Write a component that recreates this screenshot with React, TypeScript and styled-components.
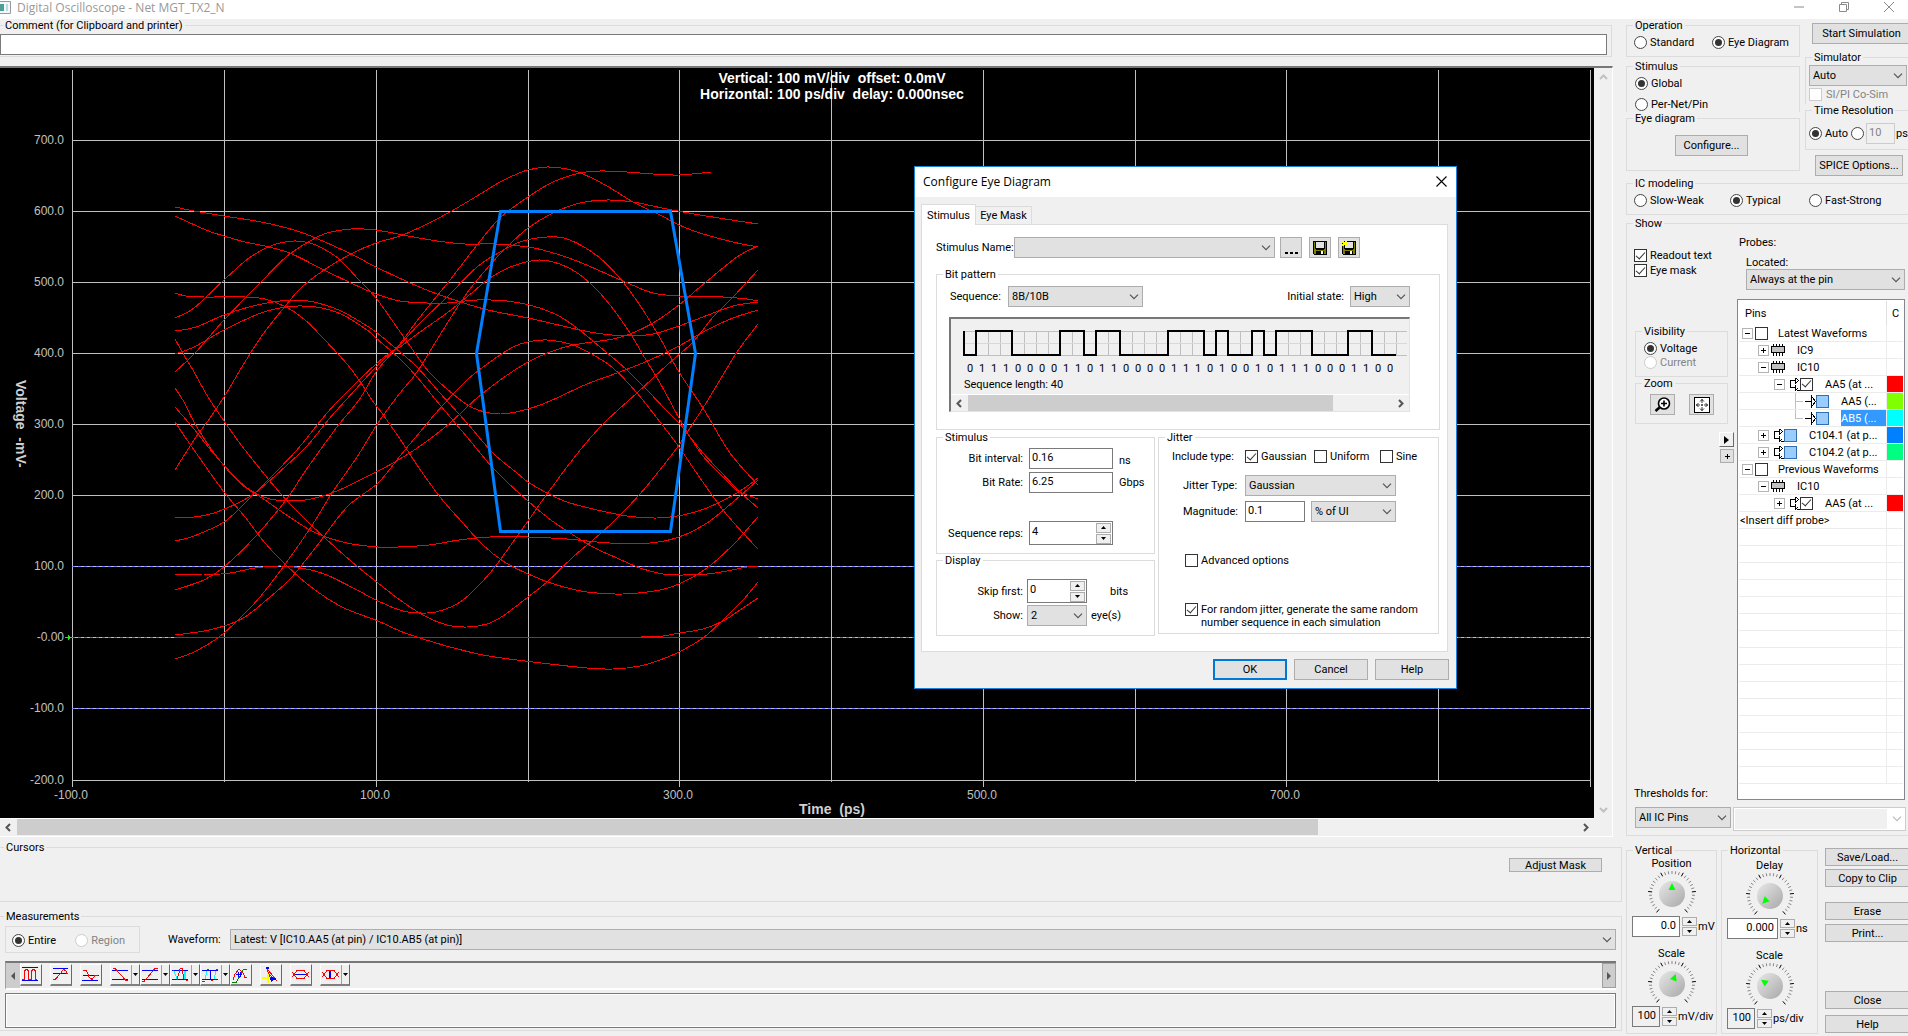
import React from "react";
import styled, { createGlobalStyle, css } from "styled-components";

const ui = `Roboto, "Liberation Sans", Arial, sans-serif`;
const plotFont = `"Liberation Sans", Arial, sans-serif`;
const caption = `"Open Sans", "Noto Sans", sans-serif`;

const Global = createGlobalStyle`
  *, *::before, *::after { box-sizing: border-box; }
  body { margin: 0; background: #f0f0f0; color: #000; font: 11px/13px ${ui}; overflow: hidden; }
  button, input, select { font: inherit; color: inherit; margin: 0; border-radius: 0; }
  svg { display: block; }
`;

/* ---------- shared controls ---------- */

const Page = styled.div`
  height: 100vh;
  display: flex;
  flex-direction: column;
  overflow: hidden;
`;

const TitleBar = styled.header`
  height: 19px;
  flex: none;
  background: #fff;
  display: flex;
  align-items: flex-start;
  margin-right: -3px;
`;

const TitleText = styled.h1`
  margin: 0 auto 0 6px;
  font: 400 12px/16px ${caption};
  color: #999;
`;

const CaptionButton = styled.button<{ $w?: number }>`
  width: ${(p) => p.$w ?? 45}px;
  height: 14px;
  padding: 0;
  border: 0;
  background: transparent;
  color: #8a8a8a;
  display: grid;
  place-items: center;
`;

const Workspace = styled.main`
  flex: 1;
  min-height: 0;
  display: grid;
  grid-template-columns: minmax(0, 1fr) 282px;
  grid-template-rows: minmax(0, 1fr);
  column-gap: 4px;
  overflow: hidden;
`;

const Group = styled.fieldset<{ $open?: "bottom" | "left"; $h?: number }>`
  margin: 0;
  padding: 0;
  min-width: 0;
  border: 1px solid #dcdcdc;
  height: ${(p) => (p.$h ? `${p.$h}px` : "auto")};
  ${(p) => p.$open === "bottom" && css`border-bottom: 0;`}
  ${(p) => p.$open === "left" && css`border-left: 0;`}
`;

const Legend = styled.legend<{ $x?: number }>`
  margin-left: ${(p) => p.$x ?? 6}px;
  padding: 0 2px;
  height: 13px;
  line-height: 14px;
  white-space: nowrap;
`;

const PushButton = styled.button<{ $w?: number; $h?: number; $primary?: boolean }>`
  flex: none;
  width: ${(p) => (p.$w ? `${p.$w}px` : "auto")};
  height: ${(p) => p.$h ?? 21}px;
  padding: 0;
  display: flex;
  align-items: center;
  justify-content: center;
  white-space: nowrap;
  background: #e1e1e1;
  border: ${(p) => (p.$primary ? "2px solid #0078d7" : "1px solid #adadad")};
`;

const SelectBox = styled.span<{ $w?: number; $h?: number }>`
  position: relative;
  display: block;
  flex: ${(p) => (p.$w ? "none" : "1")};
  width: ${(p) => (p.$w ? `${p.$w}px` : "auto")};
  height: ${(p) => p.$h ?? 21}px;

  select {
    appearance: none;
    width: 100%;
    height: 100%;
    padding: 0 18px 0 3px;
    background: #e1e1e1;
    border: 1px solid #adadad;
  }
  select:disabled {
    background: linear-gradient(to left, #fff 18px, #f0f0f0 18px);
    border: 1px solid #ccc;
    outline: 1px solid #fff;
    outline-offset: -2px;
    opacity: 1;
  }
  svg { position: absolute; right: 4px; top: 50%; margin-top: -3px; pointer-events: none; }
`;

function Select({ w, h, value, label, id, disabled }: { w?: number; h?: number; value: string; label?: string; id?: string; disabled?: boolean }) {
  return (
    <SelectBox $w={w} $h={h}>
      <select id={id} aria-label={label} disabled={disabled} defaultValue={value}>
        <option value={value}>{value}</option>
      </select>
      <svg width="10" height="6" viewBox="0 0 10 6" fill="none" stroke={disabled ? "#bbb" : "#555"} strokeWidth="1.2">
        <path d="M1 .7 5 4.7 9 .7" />
      </svg>
    </SelectBox>
  );
}

const ChoiceLabel = styled.label<{ $dim?: boolean; $gap?: number; $top?: boolean }>`
  display: flex;
  align-items: ${(p) => (p.$top ? "flex-start" : "center")};
  gap: ${(p) => p.$gap ?? 3}px;
  min-height: 13px;
  white-space: nowrap;
  color: ${(p) => (p.$dim ? "#838383" : "inherit")};
`;

const Mark = styled.input<{ $blue?: boolean }>`
  appearance: none;
  flex: none;
  width: 13px;
  height: 13px;
  border: 1px solid #333;
  background: #fff;
  display: grid;
  place-items: center;

  &[type="radio"] { border-radius: 50%; border-color: #444; }
  &[type="radio"]:checked::after { content: ""; width: 7px; height: 7px; border-radius: 50%; background: #333; }
  &[type="checkbox"]:checked::after {
    content: "";
    width: 9px;
    height: 5px;
    margin-top: -3px;
    border: solid #333;
    border-width: 0 0 1px 1px;
    transform: rotate(-48deg);
  }
  &&:disabled { border-color: #ccc; }
  ${(p) => p.$blue && css`&& { background: #99ccff; border-color: #3070b0; }`}
`;

function Choice({ type, name, text, on, dim, gap }: { type: "radio" | "checkbox"; name?: string; text: string; on?: boolean; dim?: boolean; gap?: number }) {
  return (
    <ChoiceLabel $dim={dim} $gap={gap}>
      <Mark type={type} name={name} defaultChecked={on} disabled={dim} />
      {text}
    </ChoiceLabel>
  );
}

const TextBox = styled.input<{ $w?: number; $h?: number; $right?: boolean; $shade?: boolean }>`
  flex: none;
  width: ${(p) => (p.$w ? `${p.$w}px` : "100%")};
  height: ${(p) => p.$h ?? 21}px;
  padding: 0 3px 2px 2px;
  border: 1px solid #7a7a7a;
  background: ${(p) => (p.$shade ? "#f0f0f0" : "#fff")};
  text-align: ${(p) => (p.$right ? "right" : "left")};
  &:disabled { background: #f0f0f0; border-color: #ccc; color: #838383; }
`;

const Row = styled.div<{ $mt?: number; $gap?: number; $pl?: number; $pr?: number; $top?: boolean }>`
  display: flex;
  align-items: ${(p) => (p.$top ? "flex-start" : "center")};
  gap: ${(p) => p.$gap ?? 0}px;
  margin-top: ${(p) => p.$mt ?? 0}px;
  padding: 0 ${(p) => p.$pr ?? 0}px 0 ${(p) => p.$pl ?? 0}px;
  white-space: nowrap;
`;

const Column = styled.div<{ $w?: number; $gap?: number }>`
  display: flex;
  flex-direction: column;
  flex: ${(p) => (p.$w ? "none" : "1")};
  width: ${(p) => (p.$w ? `${p.$w}px` : "auto")};
  min-width: 0;
  gap: ${(p) => p.$gap ?? 0}px;
`;

const FieldLabel = styled.label<{ $w: number; $left?: boolean }>`
  flex: none;
  width: ${(p) => p.$w}px;
  text-align: ${(p) => (p.$left ? "left" : "right")};
`;

const SpinColumn = styled.span<{ $h: number }>`
  flex: none;
  width: 15px;
  height: ${(p) => p.$h}px;
  display: grid;
  grid-template-rows: 1fr 1fr;
  gap: 1px;
  button {
    padding: 0;
    border: 1px solid #adadad;
    background: #f0f0f0;
    display: grid;
    place-items: center;
  }
`;

function Spin({ h = 19 }: { h?: number }) {
  return (
    <SpinColumn $h={h}>
      <button aria-label="Increase"><svg width="5" height="3"><path d="M0 3 2.5 0 5 3z" /></svg></button>
      <button aria-label="Decrease"><svg width="5" height="3"><path d="M0 0 2.5 3 5 0z" /></svg></button>
    </SpinColumn>
  );
}

const SpinField = styled.span<{ $w: number }>`
  flex: none;
  width: ${(p) => p.$w}px;
  height: 24px;
  display: flex;
  align-items: center;
  padding-right: 1px;
  background: #fff;
  border: 1px solid #7a7a7a;
  input { flex: 1; min-width: 0; width: 0; height: 20px; border: 0; padding: 0 2px 4px; background: transparent; }
`;

/* ---------- left side ---------- */

const LeftSide = styled.div`
  display: flex;
  flex-direction: column;
  min-width: 0;
  min-height: 0;
`;

const CommentGroup = styled(Group)`
  flex: none;
  margin-right: 10px;
  margin-bottom: 9px;
  padding: 2px 4px 0 0;
`;

const PlotFrame = styled.section`
  flex: 1;
  min-height: 0;
  display: grid;
  grid-template-columns: minmax(0, 1fr) 18px;
  grid-template-rows: minmax(0, 1fr) 18px;
  margin-right: 9px;
  margin-bottom: 4px;
  border-top: 2px solid #777;
  border-right: 1px solid #fff;
  border-bottom: 1px solid #fff;
`;

const PlotSurface = styled.div`
  background: #000;
  overflow: hidden;
  min-height: 0;
  svg { width: 100%; height: 100%; }
  text { font-family: ${plotFont}; font-size: 12px; fill: #c0c0c0; }
  .axis { font-weight: 700; font-size: 14px; fill: #d0d0d0; white-space: pre; }
  .readout { font-weight: 700; font-size: 14px; fill: #fff; white-space: pre; }
`;

const VScroll = styled.div`
  display: flex;
  flex-direction: column;
  justify-content: space-between;
  align-items: center;
  padding: 5px 0 4px;
`;

const HScroll = styled.div<{ $thumb: string }>`
  height: 17px;
  border-top: 1px solid #fff;
  display: grid;
  grid-template-columns: 17px minmax(0, 1fr) 17px;
  justify-items: center;
  align-items: center;
  > span { justify-self: stretch; align-self: stretch; }
  > span::before { content: ""; display: block; height: 100%; width: ${(p) => p.$thumb}; background: #cdcdcd; }
`;

function Chevron({ d, color = "#555" }: { d: "left" | "right" | "up" | "down"; color?: string }) {
  const path = { left: "M6 1 2.5 4.5 6 8", right: "M3 1 6.5 4.5 3 8", up: "M1 6 4.5 2.5 8 6", down: "M1 3 4.5 6.5 8 3" }[d];
  return <svg width="9" height="9" fill="none" stroke={color} strokeWidth="2"><path d={path} /></svg>;
}

const traces: number[][] = [
  [175,207,194,211,224,216,261,222,294,230,318,239,351,254,376,267,408,282,437,294,461,302,488,310,528,318,550,323,580,330,603,334,627,336,653,334,679,326,703,317,733,306,758,302],
  [175,216,206,230,224,236,245,242,269,247,292,254,322,269,351,283,376,294,400,301,427,303,447,303,477,300,507,301,533,306,557,315,577,328,600,347,627,370,647,390,667,411,679,423,687,433,703,453,720,471,740,492,758,508],
  [175,293,186,296,204,297,245,297,265,299,286,307,304,319,322,337,347,364,361,383,372,400,384,416,400,439,417,465,440,497,462,522,483,545,503,561,528,574,557,585,587,592,623,594,660,590,679,584,707,568,733,545,743,534,758,517],
  [175,318,194,308,224,280,249,258,273,245,294,241,310,243,322,248,339,259,359,280,376,298,396,326,408,343,429,372,453,394,473,408,500,414,528,409,550,401,587,384,617,373,650,360,679,346,707,330,733,318,758,310],
  [175,331,196,327,224,315,249,307,273,302,292,300,314,302,339,310,359,321,376,332,400,352,417,367,440,393,467,423,493,453,517,473,528,482,547,493,567,502,593,509,627,516,657,518,683,515,707,508,737,493,758,478],
  [175,354,194,347,224,330,261,313,286,307,302,306,322,308,343,315,367,330,376,338,400,359,417,377,440,405,467,437,493,468,520,494,547,517,567,531,593,547,617,558,640,568,663,574,683,575,707,574,727,571,747,567,758,567],
  [175,339,184,355,194,372,208,397,224,421,245,450,281,494,311,525,352,562,378,583,400,600,423,615,447,625,467,627,487,624,503,616,528,597,547,582,573,557,593,540,613,522,640,494,663,466,679,445,690,428,703,408,720,380,737,352,758,324],
  [175,372,196,352,224,320,261,282,286,257,310,241,327,233,351,229,376,230,408,236,437,241,465,244,496,244,528,247,550,252,577,261,607,274,630,284,653,293,679,296,723,297,747,299,758,301],
  [175,388,184,402,194,422,214,453,240,483,265,500,291,518,316,533,347,543,378,547,398,547,429,545,459,540,490,537,528,537,567,539,610,543,650,543,679,537,707,523,733,502,758,480],
  [175,407,194,429,214,454,240,482,255,493,270,499,291,501,311,499,337,491,378,471,400,459,423,444,450,423,477,398,503,378,528,362,550,352,573,345,613,339,630,334,653,323,679,305,700,287,737,257,758,246],
  [175,422,194,450,224,492,245,517,265,543,286,565,311,587,342,607,378,621,400,631,420,638,450,647,483,655,517,660,550,664,587,668,613,669,640,666,660,660,679,652,703,638,723,620,743,600,758,582],
  [175,470,194,440,210,418,224,397,245,362,261,337,282,310,302,287,327,268,351,254,376,243,400,236,423,226,450,212,477,196,500,182,517,174,528,170,547,167,567,169,583,174,607,186,633,202,660,215,679,225,700,233,733,242,758,247],
  [175,517,194,517,214,513,240,502,255,493,276,475,306,447,329,419,346,400,376,367,394,350,400,345,420,323,447,297,477,267,500,252,520,242,547,237,570,240,600,258,623,282,643,310,660,338,679,372,703,408,730,453,758,485],
  [175,541,194,536,224,522,245,503,265,483,296,451,322,419,339,400,376,364,394,350,400,347,420,332,447,313,473,292,490,278,513,266,540,260,567,267,590,283,610,305,630,333,643,355,660,383,679,418,690,437,703,456,720,474,733,487,740,492,758,499],
  [175,574,204,575,230,573,255,568,281,566,306,569,327,575,357,590,378,601,403,611,427,613,443,610,463,600,490,573,513,542,528,521,547,494,577,454,603,424,637,393,667,365,693,342,713,317,733,297,758,270],
  [175,590,204,580,224,567,255,537,286,500,306,470,337,427,359,400,376,372,394,351,400,344,420,317,450,280,477,245,500,218,528,197,553,182,580,173,600,171,627,172,653,174,679,175,711,172],
  [175,635,204,631,224,626,245,617,270,597,291,578,316,547,347,507,378,483,400,456,420,432,443,405,467,380,490,362,513,347,528,342,547,340,570,344,590,353,613,368,637,393,660,422,679,447,700,478,723,510,743,533,758,549],
  [175,659,194,652,219,637,240,618,260,597,286,563,311,527,332,493,357,457,378,423,400,393,417,372,443,330,467,293,490,265,507,247,528,228,553,213,580,203,607,200,633,202,667,209,700,215,758,224],
  [641,637,663,636,679,633,703,629,723,621,740,610,758,598],
];

function smooth(f: number[]) {
  const n = f.length / 2;
  const at = (i: number) => {
    const k = Math.max(0, Math.min(n - 1, i));
    return [f[2 * k], f[2 * k + 1]];
  };
  let d = `M${f[0]} ${f[1]}`;
  for (let i = 0; i < n - 1; i++) {
    const [a, b, c, e] = [at(i - 1), at(i), at(i + 1), at(i + 2)];
    d += `C${b[0] + (c[0] - a[0]) / 6} ${b[1] + (c[1] - a[1]) / 6} ${c[0] - (e[0] - b[0]) / 6} ${c[1] - (e[1] - b[1]) / 6} ${c[0]} ${c[1]}`;
  }
  return d;
}

const gridX = [72, 224, 376, 528, 679, 831, 983, 1135, 1286, 1438, 1590];
const gridY: [number, string][] = [[140, "700.0"], [211, "600.0"], [282, "500.0"], [353, "400.0"], [424, "300.0"], [495, "200.0"], [566, "100.0"], [637, "-0.00"], [708, "-100.0"], [780, "-200.0"]];

function Plot() {
  return (
    <PlotSurface>
      <svg viewBox="0 68 1594 750" preserveAspectRatio="xMinYMin meet" role="img" aria-label="Eye diagram waveforms">
        <g stroke="#c0c0c0" shapeRendering="crispEdges">
          {gridX.map((x, i) => <path key={x} d={`M${x + 0.5} 70V${i % 2 ? 782 : 787}`} />)}
          {gridY.map(([y]) => <path key={y} d={`M72 ${y + 0.5}H1591`} />)}
          <path d="M72 566.5H1591M72 708.5H1591" stroke="#8080ff" strokeDasharray="3 3" />
          <path d="M72 637.5H1591" stroke="#00c000" strokeDasharray="3 3" />
          <path d="M65 637.5H72M68.5 635V640M69.5 636V639" stroke="#00ff00" />
        </g>
        <g stroke="#ff0000" fill="none" shapeRendering="crispEdges">
          <path d="M175 637.5H758" />
          {traces.map((t, i) => <path key={i} d={smooth(t)} />)}
        </g>
        <path d="M500.5 211.5H670.5L695.5 353.5 670.5 531.5H500.5L476.5 353.5Z" fill="none" stroke="#0080ff" strokeWidth="3" />
        {gridY.map(([y, t]) => <text key={t} x="64" y={y + 4} textAnchor="end">{t}</text>)}
        {["-100.0", "100.0", "300.0", "500.0", "700.0"].map((t, i) => (
          <text key={t} x={gridX[i * 2] - 1} y="799" textAnchor="middle">{t}</text>
        ))}
        <text className="axis" transform="translate(16 380) rotate(90)">{"Voltage  -mV-"}</text>
        <text className="axis" x="832" y="814" textAnchor="middle">{"Time  (ps)"}</text>
        <text className="readout" x="832" y="83" textAnchor="middle">{"Vertical: 100 mV/div  offset: 0.0mV"}</text>
        <text className="readout" x="832" y="99" textAnchor="middle">{"Horizontal: 100 ps/div  delay: 0.000nsec"}</text>
      </svg>
    </PlotSurface>
  );
}

const CursorGroup = styled(Group)`
  flex: none;
  padding: 4px 19px 0 0;
  button { margin-left: auto; }
`;

const MeasureGroup = styled(Group)`
  flex: none;
  margin: 8px 0 5px;
  padding: 3px 5px 0;
`;

const RangeBox = styled.div`
  width: 135px;
  height: 27px;
  border: 1px solid #dcdcdc;
  padding: 2px 14px 0 6px;
  display: flex;
  align-items: center;
  justify-content: space-between;
`;

const ToolStrip = styled.div`
  margin-top: 8px;
  height: 29px;
  display: flex;
  align-items: stretch;
  border-top: 2px solid #777;
  border-left: 1px solid #a0a0a0;
  border-bottom: 2px solid #fff;
`;

const StripScroll = styled.button`
  width: 14px;
  padding: 0;
  border: 0;
  background: #cdcdcd;
  display: grid;
  place-items: center;
  &:last-child { margin-left: auto; border: 1px solid #a0a0a0; }
`;

const ToolButton = styled.button<{ $gap?: boolean; $split?: boolean }>`
  margin: 1px ${(p) => (p.$gap ? 8 : 0)}px 2px 0;
  width: ${(p) => (p.$split ? 30 : 22)}px;
  padding: 0;
  display: flex;
  align-items: stretch;
  background: #f0f0f0;
  border: 1px solid #fff;
  border-right: 1px solid #696969;
  border-bottom: 2px solid #808080;
  i { display: grid; place-items: center; width: 8px; border-left: 1px solid #a0a0a0; }
`;

const ReadoutBox = styled.output`
  display: block;
  margin-top: 3px;
  height: 35px;
  border: 1px solid #7a7a7a;
  outline: 1px solid #fff;
  outline-offset: -2px;
`;

const B = "#0000ff";
const R = "#ff0000";
const C = "#00ffff";
type Tool = { name: string; gap?: boolean; split?: boolean; strokes: [string, string, number?][] };
const tools: Tool[] = [
  { name: "Period", gap: true, strokes: [[B, "M1 2.5H17M1 15.5H17"], [R, "M1 14.5H3.5V6L5 4.5H6L7.5 6V14.5H10.5V6L12 4.5H13L14.5 6V14.5H16"]] },
  { name: "Overshoot", gap: true, strokes: [[B, "M2 3.5H17M2 8.5H17"], [R, "M2 14.5H4L10 8 11 6 13 4.5 15 6 16 8.5H17"]] },
  { name: "Undershoot", gap: true, strokes: [[B, "M2 10.5H18M1 15.5H17"], [R, "M2 5.5H5L7 9 8 12 11 14.5 13 12 14 10.5H17"]] },
  { name: "Fall time", split: true, strokes: [[B, "M1 5.5H17M1 14.5H17"], [R, "M2 3.5H4L15 15.5H17"]] },
  { name: "Rise time", split: true, strokes: [[B, "M1 5.5H17M1 14.5H17"], [R, "M1 16.5H3L14 3.5H17"]] },
  { name: "Width", split: true, strokes: [[B, "M1 5.5H17M1 14.5H17"], [C, "M3 6 6 14M13 6 15 14M15 6 13 14"], [R, "M2 5 3 6M6 15 9 4 11 3 13 14M15 15.5H17"]] },
  { name: "Delay", split: true, strokes: [[B, "M1 5.5H17M1 14.5H17M9.5 6V15"], [C, "M4 14 6 6M13 14 15 6"], [R, "M1 16.5H4M6 4.5H8M10 15.5H12M15 4.5H17"]] },
  { name: "Crossing", gap: true, strokes: [["#008000", "M1 17.5H5L9 11 12 5 16 4.5"], [R, "M2 15 4 9 8 4 12 8 14 12.5H16"], [B, "M5 9.5H11M7.5 7V12M9.5 7V12"]] },
  { name: "Slope", gap: true, strokes: [["#ffff00", "M6.5 2V18M1 12.5H13", 2], [R, "M6 4 11 17M7 5 16 16M8 9 13 14"], [B, "M5 3H8M11 12V16M9 14H15", 2]] },
  { name: "Eye height", gap: true, strokes: [[B, "M4 9.5H16"], [R, "M1 7 3 9.5 6 5.5H13L16 9.5 18 7M1 12 3 9.5 6 13.5H13L16 9.5 18 12"]] },
  { name: "Eye width", split: true, strokes: [[R, "M1 7 3 9.5 6 5.5H13L16 9.5 18 7M1 12 3 9.5 6 13.5H13L16 9.5 18 12"], [B, "M9 6V13", 2]] },
];

/* ---------- right side ---------- */

const RightSide = styled.aside`
  display: flex;
  flex-direction: column;
  width: 290px;
  min-height: 0;
`;

const Indent = styled.div<{ $l?: number; $t?: number }>`
  padding: ${(p) => p.$t ?? 0}px 0 0 ${(p) => p.$l ?? 0}px;
`;

const ShowGroup = styled(Group)`
  flex: 1;
  min-height: 0;
  margin: 2px 0 8px;
`;

const ShowBody = styled.div`
  height: 100%;
  display: flex;
  flex-direction: column;
`;

const ShowUpper = styled.div`
  flex: 1;
  display: flex;
  min-height: 0;
`;

const ShowLeft = styled.div`
  width: 110px;
  display: flex;
  flex-direction: column;
  padding: 19px 0 0 7px;
`;

const SubGroup = styled(Group)<{ $mt?: number }>`
  width: 93px;
  margin: ${(p) => p.$mt ?? 0}px 0 0 1px;
  padding: 4px 0 0 8px;
`;

const IconButton = styled.button<{ $w?: number; $h?: number; $raised?: boolean }>`
  flex: none;
  width: ${(p) => p.$w ?? 25}px;
  height: ${(p) => p.$h ?? 21}px;
  padding: 0;
  display: grid;
  place-items: center;
  background: ${(p) => (p.$raised ? "#f0f0f0" : "#e1e1e1")};
  border: 1px solid #adadad;
  ${(p) => p.$raised && css`border-color: #fff #696969 #696969 #fff;`}
`;

const SideKeys = styled.div`
  display: flex;
  flex-direction: column;
  align-items: flex-end;
  gap: 2px;
  margin: 8px 3px auto 0;
`;

const Tree = styled.table`
  flex: 1;
  width: 168px;
  display: flex;
  flex-direction: column;
  background: #fff;
  border: 1px solid #828790;
  margin-top: 9px;
  padding: 1px;
  overflow: hidden;
  thead, tbody { display: block; }
  tr { display: grid; grid-template-columns: minmax(0, 1fr) 17px; height: 17px; }
  thead tr { height: 24px; align-items: stretch; }
  th { font-weight: 400; text-align: left; padding: 6px 0 0 6px; }
  th + th { border-left: 1px solid #e0e0e0; overflow: hidden; padding-left: 5px; }
  td { padding: 0; border-bottom: 1px solid #ececec; overflow: hidden; }
`;

const TreeCell = styled.div<{ $pad: number }>`
  display: flex;
  align-items: center;
  height: 16px;
  padding-left: ${(p) => p.$pad}px;
  white-space: nowrap;
`;

const Swatch = styled.td<{ $c?: string }>`
  && { border-left: 1px solid #ececec; background: ${(p) => p.$c ?? "#fff"}; }
`;

const Expander = styled.button`
  flex: none;
  width: 11px;
  height: 11px;
  padding: 0;
  border: 1px solid #b4b4b4;
  background: #fff;
  display: grid;
  place-items: center;
`;

const Node = styled.span<{ $ml: number; $sel?: boolean }>`
  flex: 1;
  height: 16px;
  line-height: 17px;
  margin-left: ${(p) => p.$ml}px;
  ${(p) => p.$sel && css`background: #3399ff; color: #fff;`}
`;

const Chip = () => (
  <svg width="15" height="13" viewBox="0 0 15 13" stroke="#000" fill="#c0c0c0" shapeRendering="crispEdges">
    <path d="M2.5 0V12M5.5 0V12M8.5 0V12M11.5 0V12" />
    <path d="M.5 2.5H13.5V8.5H.5z" />
  </svg>
);

const Probe = ({ input }: { input?: boolean }) => (
  <svg width="11" height="13" viewBox="0 0 11 13" fill="none" stroke="#000" shapeRendering="crispEdges">
    {input ? <path d="M0 6.5H6M6.5 1V12L10.5 6.5Z" /> : <path d="M6 2.5H1.5V9.5H6M6.5 0V5L9.5 2.5ZM6.5 7V12L9.5 9.5M8 12.5H11" />}
  </svg>
);

type TreeRow = { lv: number; kind: "root" | "chip" | "out" | "in" | "text" | "blank"; text?: string; open?: boolean; on?: boolean; blue?: boolean; sel?: boolean; color?: string };
const rows: TreeRow[] = [
  { lv: 0, kind: "root", text: "Latest Waveforms", open: true },
  { lv: 1, kind: "chip", text: "IC9" },
  { lv: 1, kind: "chip", text: "IC10", open: true },
  { lv: 2, kind: "out", text: "AA5 (at ...", open: true, on: true, color: "#ff0000" },
  { lv: 3, kind: "in", text: "AA5 (...", blue: true, color: "#80ff00" },
  { lv: 3, kind: "in", text: "AB5 (...", blue: true, sel: true, color: "#00ffff" },
  { lv: 1, kind: "out", text: "C104.1 (at p...", blue: true, color: "#0080ff" },
  { lv: 1, kind: "out", text: "C104.2 (at p...", blue: true, color: "#00ff80" },
  { lv: 0, kind: "root", text: "Previous Waveforms", open: true },
  { lv: 1, kind: "chip", text: "IC10", open: true },
  { lv: 2, kind: "out", text: "AA5 (at ...", on: true, color: "#ff0000" },
  { lv: 0, kind: "text", text: "<Insert diff probe>" },
  ...Array.from({ length: 15 }, (): TreeRow => ({ lv: 0, kind: "blank" })),
];

function PinTree() {
  return (
    <Tree>
      <thead><tr><th>Pins</th><th>C</th></tr></thead>
      <tbody>
        {rows.map((r, i) => {
          const expander = (
            <Expander aria-label={r.open ? "Collapse" : "Expand"}>
              <svg width="5" height="5" stroke="#000" shapeRendering="crispEdges"><path d={r.open ? "M0 2.5H5" : "M0 2.5H5M2.5 0V5"} /></svg>
            </Expander>
          );
          return (
            <tr key={i}>
              <td>
                {r.kind === "text" && <TreeCell $pad={1}>{r.text}</TreeCell>}
                {r.kind === "root" && <TreeCell $pad={3}>{expander}<Indent $l={2}><Mark type="checkbox" aria-label={r.text} /></Indent><Node $ml={10}>{r.text}</Node></TreeCell>}
                {r.kind === "chip" && <TreeCell $pad={19}>{expander}<Indent $l={2}><Chip /></Indent><Node $ml={11}>{r.text}</Node></TreeCell>}
                {r.kind === "out" && <TreeCell $pad={3 + 16 * r.lv}>{expander}<Indent $l={4}><Probe /></Indent><Mark type="checkbox" $blue={r.blue} defaultChecked={r.on} aria-label={r.text} /><Node $ml={12}>{r.text}</Node></TreeCell>}
                {r.kind === "in" && (
                  <TreeCell $pad={55}>
                    <svg width="11" height="16" stroke="#c0c0c0" shapeRendering="crispEdges"><path d={r.sel ? "M1.5 0V8M1 8.5H9" : "M1.5 0V16M1 8.5H9"} /></svg>
                    <Probe input /><Mark type="checkbox" $blue aria-label={r.text} /><Node $ml={12} $sel={r.sel}>{r.text}</Node>
                  </TreeCell>
                )}
              </td>
              <Swatch $c={r.color} />
            </tr>
          );
        })}
      </tbody>
    </Tree>
  );
}

const DialGroup = styled(Group)`
  display: block;
  height: 190px;
`;

const DialLabel = styled.div`
  height: 13px;
  text-align: center;
`;

const DialSvg = styled.svg`
  margin: 0 auto;
`;

const DialRow = styled(Row)`
  height: 21px;
  padding-left: 5px;
  gap: 1px;
  input { margin-right: 1px; }
`;

function Dial({ angle }: { angle: number }) {
  const ticks = Array.from({ length: 31 }, (_, i) => {
    const a = ((-140 + (280 / 30) * i) * Math.PI) / 180;
    const major = i % 6 === 0;
    const r2 = major ? 24 : 23;
    return <path key={i} stroke={major ? "#000" : "#888"} d={`M${26 + 20 * Math.sin(a)} ${24 - 20 * Math.cos(a)}L${26 + r2 * Math.sin(a)} ${24 - r2 * Math.cos(a)}`} />;
  });
  return (
    <DialSvg width="52" height="46" viewBox="0 0 52 46">
      <defs>
        <linearGradient id="knob" x1="0" y1="0" x2="1" y2="1">
          <stop offset="0" stopColor="#e8e8e8" />
          <stop offset="1" stopColor="#a8a8a8" />
        </linearGradient>
      </defs>
      {ticks}
      <circle cx="26" cy="24" r="13" fill="url(#knob)" />
      <path d="M26 13 29.5 20H22.5Z" fill="#00ff00" transform={`rotate(${angle} 26 24)`} />
    </DialSvg>
  );
}

const CommandColumn = styled.div`
  display: flex;
  flex-direction: column;
  padding-top: 4px;
  margin-left: 3px;
`;

const Gap = styled.div<{ $h: number }>`
  height: ${(p) => p.$h}px;
  flex: none;
`;

/* ---------- dialog ---------- */

const DialogWindow = styled.div`
  position: absolute;
  left: 914px;
  top: 166px;
  width: 543px;
  background: #f0f0f0;
  border: 1px solid #1883d7;
`;

const DialogTitle = styled.div`
  height: 30px;
  padding: 0 5px 1px 8px;
  display: flex;
  align-items: center;
  justify-content: space-between;
  background: #fff;
  h2 { margin: 0; font: 400 12px/16px ${caption}; }
`;

const TabBar = styled.div`
  display: flex;
  align-items: flex-end;
  padding: 7px 0 0 6px;
`;

const Tab = styled.button<{ $active?: boolean }>`
  height: ${(p) => (p.$active ? 21 : 18)}px;
  width: ${(p) => (p.$active ? 55 : 56)}px;
  padding: 0;
  margin-bottom: ${(p) => (p.$active ? -1 : 0)}px;
  border: 1px solid #dcdcdc;
  border-bottom: 0;
  border-left-width: ${(p) => (p.$active ? 1 : 0)}px;
  background: ${(p) => (p.$active ? "#fff" : "#f0f0f0")};
  z-index: 1;
`;

const TabPanel = styled.div`
  margin: 0 8px 0 6px;
  height: 428px;
  padding: 12px 7px 0 14px;
  background: #fff;
  border: 1px solid #dcdcdc;
`;

const PatternBox = styled.div`
  margin: 10px 29px 0 12px;
  height: 95px;
  background: #f0f0f0;
  border: 2px solid #777;
  border-right: 1px solid #e3e3e3;
  border-bottom: 1px solid #e3e3e3;
  display: flex;
  flex-direction: column;
  > :last-child { margin-top: auto; }
`;

const BitRow = styled.div`
  display: flex;
  padding: 2px 0 3px 13px;
  span { width: 12px; text-align: center; }
`;

const DialogFooter = styled.div`
  display: flex;
  justify-content: flex-end;
  gap: 7px;
  padding: 7px 7px 8px;
`;

const bits = "011100001101100001110100101110001100";

function Pattern() {
  let d = "M13 12V36";
  let prev = "0";
  bits.split("").forEach((b, i) => {
    if (i && b !== prev) d += b === "1" ? "V12" : "V36";
    d += `H${13 + 12 * (i + 1)}`;
    prev = b;
  });
  return (
    <svg width="457" height="41" shapeRendering="crispEdges" fill="none">
      <path d={bits.split("").map((_, i) => `M${25.5 + 12 * i} 12V36`).join("")} stroke="#c0c0c0" />
      <path d="M13 12.5H456M13 36.5H456" stroke="#c0c0c0" />
      <path d="M13 24.5H456" stroke="#d8d8d8" />
      <path d={d} stroke="#000" strokeWidth="2" />
    </svg>
  );
}

const Floppy = ({ star }: { star?: boolean }) => (
  <svg width="14" height="14" viewBox="0 0 14 14" shapeRendering="crispEdges">
    <path d="M0 0H14V14H1L0 13Z" fill="#000" />
    <path d="M1 1H2V8H3V9H11V8H12V1H13V13H11V10H3V13H1Z" fill="#808000" />
    <path d="M3 1H11V7H3Z" fill="#e1e1e1" />
    <path d="M8 10H10V13H8Z" fill="#fff" />
    {star && <path d="M0 0H2V1H3V0H5V2H4V3H5V5H3V4H2V5H0V3H1V2H0Z" fill="#ffff00" />}
  </svg>
);

function ConfigureDialog() {
  return (
    <DialogWindow role="dialog" aria-label="Configure Eye Diagram">
      <DialogTitle>
        <h2>Configure Eye Diagram</h2>
        <CaptionButton $w={20} aria-label="Close dialog">
          <svg width="11" height="11" stroke="#000" strokeWidth="1.1"><path d="M.5 .5 10.5 10.5M10.5 .5 .5 10.5" /></svg>
        </CaptionButton>
      </DialogTitle>
      <TabBar role="tablist">
        <Tab $active role="tab" aria-selected>Stimulus</Tab>
        <Tab role="tab">Eye Mask</Tab>
      </TabBar>
      <TabPanel>
        <Row>
          <FieldLabel htmlFor="stimName" $w={78} $left>Stimulus Name:</FieldLabel>
          <Select id="stimName" w={261} value="" />
          <Row $gap={7} $pl={5}>
            <IconButton $w={22} aria-label="Browse"><svg width="13" height="14"><path d="M0 11H3V13H0ZM5 11H8V13H5ZM10 11H13V13H10Z" /></svg></IconButton>
            <IconButton $w={22} aria-label="Save"><Floppy /></IconButton>
            <IconButton $w={22} aria-label="Save as new"><Floppy star /></IconButton>
          </Row>
        </Row>
        <Gap $h={10} />
        <Group $h={162}>
          <Legend>Bit pattern</Legend>
          <Row $mt={5} $pl={13} $pr={29}>
            <FieldLabel htmlFor="seq" $w={58} $left>Sequence:</FieldLabel>
            <Select id="seq" w={135} value="8B/10B" />
            <FieldLabel htmlFor="init" $w={201}>Initial state:</FieldLabel>
            <Row $pl={6}><Select id="init" w={60} value="High" /></Row>
          </Row>
          <PatternBox>
            <Pattern />
            <BitRow>{bits.split("").map((b, i) => <span key={i}>{b}</span>)}</BitRow>
            <Row $pl={13}>Sequence length: 40</Row>
            <HScroll $thumb="86%"><Chevron d="left" /><span /><Chevron d="right" /></HScroll>
          </PatternBox>
        </Group>
        <Row $mt={1} $gap={3} $top>
          <Column $w={219}>
            <Group $h={123}>
              <Legend>Stimulus</Legend>
              <Row $mt={4} $gap={6}><FieldLabel htmlFor="bi" $w={86}>Bit interval:</FieldLabel><TextBox id="bi" $w={84} defaultValue="0.16" /><Indent $t={3}>ns</Indent></Row>
              <Row $mt={3} $gap={6}><FieldLabel htmlFor="br" $w={86}>Bit Rate:</FieldLabel><TextBox id="br" $w={84} defaultValue="6.25" />Gbps</Row>
              <Row $mt={28} $gap={6}><FieldLabel htmlFor="sr" $w={86}>Sequence reps:</FieldLabel><SpinField $w={84}><input id="sr" defaultValue="4" /><Spin h={21} /></SpinField></Row>
            </Group>
            <Group $h={82}>
              <Legend>Display</Legend>
              <Row $mt={12} $gap={4}><FieldLabel htmlFor="sf" $w={86}>Skip first:</FieldLabel><SpinField $w={60}><input id="sf" defaultValue="0" /><Spin h={21} /></SpinField><Indent $l={19}>bits</Indent></Row>
              <Row $mt={2} $gap={4}><FieldLabel htmlFor="sh" $w={86}>Show:</FieldLabel><Select id="sh" w={60} value="2" />eye(s)</Row>
            </Group>
          </Column>
          <Column $w={281}>
            <Group $h={203}>
              <Legend>Jitter</Legend>
              <Row $mt={6} $pl={13}>
                <FieldLabel as="span" $w={73} $left>Include type:</FieldLabel>
                <FieldLabel as="span" $w={69} $left><Choice type="checkbox" text="Gaussian" on /></FieldLabel>
                <FieldLabel as="span" $w={66} $left><Choice type="checkbox" text="Uniform" /></FieldLabel>
                <Choice type="checkbox" text="Sine" />
              </Row>
              <Row $mt={12} $pl={24}><FieldLabel htmlFor="jt" $w={62} $left>Jitter Type:</FieldLabel><Select id="jt" w={151} value="Gaussian" /></Row>
              <Row $mt={5} $pl={24}><FieldLabel htmlFor="mg" $w={62} $left>Magnitude:</FieldLabel><TextBox id="mg" $w={60} defaultValue="0.1" /><Row $pl={6}><Select label="Magnitude unit" w={85} value="% of UI" /></Row></Row>
              <Row $mt={32} $pl={26}><Choice type="checkbox" text="Advanced options" /></Row>
              <Row $mt={36} $pl={26}>
                <ChoiceLabel $top>
                  <Mark type="checkbox" defaultChecked />
                  <span>For random jitter, generate the same random<br />number sequence in each simulation</span>
                </ChoiceLabel>
              </Row>
            </Group>
          </Column>
        </Row>
      </TabPanel>
      <DialogFooter>
        <PushButton $w={74} $primary>OK</PushButton>
        <PushButton $w={74}>Cancel</PushButton>
        <PushButton $w={74}>Help</PushButton>
      </DialogFooter>
    </DialogWindow>
  );
}

/* ---------- page ---------- */

export default function App() {
  return (
    <Page>
      <Global />
      <TitleBar>
        <svg width="11" height="15" viewBox="0 0 11 15">
          <path d="M0 1.5H10.5V13.5H0" fill="#f4f8fa" stroke="#999" />
          <path d="M0 4H4V11H0z" fill="#4f9e94" />
          <path d="M6 4H8V11H6z" fill="#b8dce6" />
        </svg>
        <TitleText>Digital Oscilloscope - Net MGT_TX2_N</TitleText>
        <CaptionButton aria-label="Minimize"><svg width="10" height="2" stroke="currentColor"><path d="M0 1H10" /></svg></CaptionButton>
        <CaptionButton aria-label="Restore"><svg width="10" height="10" fill="none" stroke="currentColor"><path d="M.5 2.5H7.5V9.5H.5ZM2.5 2.5V.5H9.5V7.5H7.5" /></svg></CaptionButton>
        <CaptionButton aria-label="Close window"><svg width="10" height="10" stroke="currentColor"><path d="M0 0 10 10M10 0 0 10" /></svg></CaptionButton>
      </TitleBar>
      <Workspace>
        <LeftSide>
          <CommentGroup $open="left" $h={38}>
            <Legend $x={3}>Comment (for Clipboard and printer)</Legend>
            <TextBox aria-label="Comment" />
          </CommentGroup>
          <PlotFrame>
            <Plot />
            <VScroll><Chevron d="up" color="#c0c0c0" /><Chevron d="down" color="#c0c0c0" /></VScroll>
            <HScroll $thumb="83.4%"><Chevron d="left" /><span /><Chevron d="right" /></HScroll>
          </PlotFrame>
          <CursorGroup $open="left" $h={61}>
            <Legend $x={4}>Cursors</Legend>
            <PushButton $w={93} $h={14}>Adjust Mask</PushButton>
          </CursorGroup>
          <MeasureGroup $open="left" $h={121}>
            <Legend $x={-1}>Measurements</Legend>
            <Row>
              <RangeBox><Choice type="radio" name="range" text="Entire" on /><Choice type="radio" name="range" text="Region" dim /></RangeBox>
              <Row $pl={28}><FieldLabel htmlFor="wave" $w={62} $left>Waveform:</FieldLabel></Row>
              <Select id="wave" value="Latest: V [IC10.AA5 (at pin) / IC10.AB5 (at pin)]" />
            </Row>
            <ToolStrip>
              <StripScroll aria-label="Scroll left"><svg width="4" height="8" fill="#555"><path d="M4 0V8L0 4z" /></svg></StripScroll>
              {tools.map((t) => (
                <ToolButton key={t.name} $gap={t.gap} $split={t.split} aria-label={t.name}>
                  <svg width="20" height="20" viewBox="0 0 20 20" fill="none" shapeRendering="crispEdges">
                    {t.strokes.map(([c, d, w], i) => <path key={i} stroke={c} strokeWidth={w ?? 1} d={d} />)}
                  </svg>
                  {t.split && <i><svg width="5" height="3"><path d="M0 0H5L2.5 3z" /></svg></i>}
                </ToolButton>
              ))}
              <StripScroll aria-label="Scroll right"><svg width="4" height="8" fill="#555"><path d="M0 0V8L4 4z" /></svg></StripScroll>
            </ToolStrip>
            <ReadoutBox />
          </MeasureGroup>
        </LeftSide>

        <RightSide>
          <Row $top $gap={5}>
            <Column $w={174}>
              <Group $h={38}>
                <Legend>Operation</Legend>
                <Row $mt={4} $pl={7}>
                  <FieldLabel as="span" $w={78} $left><Choice type="radio" name="op" text="Standard" /></FieldLabel>
                  <Choice type="radio" name="op" text="Eye Diagram" on />
                </Row>
              </Group>
              <Gap $h={3} />
              <Group $open="bottom" $h={52}>
                <Legend>Stimulus</Legend>
                <Row $mt={4} $pl={8}><Choice type="radio" name="stim" text="Global" on /></Row>
                <Row $mt={8} $pl={8}><Choice type="radio" name="stim" text="Per-Net/Pin" /></Row>
              </Group>
              <Group $h={59}>
                <Legend>Eye diagram</Legend>
                <Row $mt={10} $pl={48}><PushButton $w={73}>Configure...</PushButton></Row>
              </Group>
            </Column>
            <Column>
              <Row $mt={4} $pl={7}><PushButton $w={99}>Start Simulation</PushButton></Row>
              <Gap $h={7} />
              <Group $open="bottom" $h={53}>
                <Legend>Simulator</Legend>
                <Row $mt={1} $pl={3}><Select label="Simulator" w={98} value="Auto" /></Row>
                <Row $mt={2} $pl={3}><Choice type="checkbox" text="SI/PI Co-Sim" dim gap={4} /></Row>
              </Group>
              <Group $h={46}>
                <Legend>Time Resolution</Legend>
                <Row $mt={6} $pl={3}>
                  <FieldLabel as="span" $w={42} $left><Choice type="radio" name="res" text="Auto" on /></FieldLabel>
                  <Mark type="radio" name="res" aria-label="Fixed resolution" />
                  <Row $pl={2} $gap={1}><TextBox $w={29} disabled defaultValue="10" aria-label="Resolution" />ps</Row>
                </Row>
              </Group>
              <Row $mt={5} $pl={10}><PushButton $w={88}>SPICE Options...</PushButton></Row>
            </Column>
          </Row>
          <Gap $h={1} />
          <Group $h={38}>
            <Legend>IC modeling</Legend>
            <Row $mt={4} $pl={7}>
              <FieldLabel as="span" $w={96} $left><Choice type="radio" name="ic" text="Slow-Weak" /></FieldLabel>
              <FieldLabel as="span" $w={79} $left><Choice type="radio" name="ic" text="Typical" on /></FieldLabel>
              <Choice type="radio" name="ic" text="Fast-Strong" />
            </Row>
          </Group>
          <ShowGroup>
            <Legend>Show</Legend>
            <ShowBody>
              <ShowUpper>
                <ShowLeft>
                  <Choice type="checkbox" text="Readout text" on />
                  <Gap $h={2} />
                  <Choice type="checkbox" text="Eye mask" on />
                  <SubGroup $mt={48} $h={52}>
                    <Legend $x={-2}>Visibility</Legend>
                    <Choice type="radio" name="vis" text="Voltage" on />
                    <Gap $h={1} />
                    <Choice type="radio" name="vis" text="Current" dim />
                  </SubGroup>
                  <SubGroup $h={47}>
                    <Legend $x={-2}>Zoom</Legend>
                    <Row $gap={14} $pl={6}>
                      <IconButton aria-label="Zoom in">
                        <svg width="17" height="15" fill="#fff" stroke="#000" strokeWidth="1.6"><circle cx="10" cy="6.5" r="5.5" /><path d="M7 6.5H13M10 3.5V9.5" /><path d="M5.5 10.5 1.5 14" strokeWidth="2.5" /></svg>
                      </IconButton>
                      <IconButton aria-label="Fit window">
                        <svg width="16" height="16" fill="none" stroke="#000">
                          <path d="M.5 .5H15.5V15.5H.5z" fill="#fff" shapeRendering="crispEdges" />
                          <path d="M8 2V6M8 10V14M2 8H6M10 8H14M7 8H9M8 7V9M6 4.5 8 2.5 10 4.5M6 11.5 8 13.5 10 11.5M4.5 6 2.5 8 4.5 10M11.5 6 13.5 8 11.5 10" strokeWidth=".8" />
                        </svg>
                      </IconButton>
                    </Row>
                  </SubGroup>
                  <SideKeys>
                    <IconButton $w={15} $h={15} $raised aria-label="Expand panel"><svg width="5" height="8"><path d="M0 0V8L5 4z" /></svg></IconButton>
                    <IconButton $w={14} $h={14} aria-label="Add"><svg width="5" height="5" stroke="#000" shapeRendering="crispEdges"><path d="M0 2.5H5M2.5 0V5" /></svg></IconButton>
                  </SideKeys>
                  <span>Thresholds for:</span>
                </ShowLeft>
                <Column $w={169}>
                  <Row $mt={6} $pl={2}>Probes:</Row>
                  <Row $mt={7} $pl={9}><label htmlFor="located">Located:</label></Row>
                  <Row $pl={9}><Select id="located" w={159} value="Always at the pin" /></Row>
                  <PinTree />
                </Column>
              </ShowUpper>
              <Row $mt={7} $pl={8} $gap={2} $top>
                <Select label="Thresholds for" w={96} value="All IC Pins" />
                <Select label="Threshold value" w={173} h={24} value="" disabled />
              </Row>
              <Gap $h={4} />
            </ShowBody>
          </ShowGroup>
          <Row $top $gap={4}>
            <Column $w={91}>
              <DialGroup>
                <Legend>Vertical</Legend>
                <DialLabel>Position</DialLabel>
                <Dial angle={0} />
                <DialRow><TextBox $w={48} $right defaultValue="0.0" aria-label="Vertical position" /><Spin /><span>mV</span></DialRow>
                <Gap $h={10} />
                <DialLabel>Scale</DialLabel>
                <Dial angle={20} />
                <DialRow><TextBox $w={28} $right $shade defaultValue="100" aria-label="Vertical scale" /><Spin /><span>mV/div</span></DialRow>
              </DialGroup>
            </Column>
            <Column $w={97}>
              <DialGroup>
                <Legend>Horizontal</Legend>
                <Gap $h={2} />
                <DialLabel>Delay</DialLabel>
                <Dial angle={-135} />
                <DialRow><TextBox $w={51} $right defaultValue="0.000" aria-label="Horizontal delay" /><Spin /><span>ns</span></DialRow>
                <Gap $h={10} />
                <DialLabel>Scale</DialLabel>
                <Dial angle={-55} />
                <DialRow><TextBox $w={28} $right $shade defaultValue="100" aria-label="Horizontal scale" /><Spin /><span>ps/div</span></DialRow>
              </DialGroup>
            </Column>
            <CommandColumn>
              <PushButton $w={85} $h={18}>Save/Load...</PushButton>
              <Gap $h={3} />
              <PushButton $w={85} $h={18}>Copy to Clip</PushButton>
              <Gap $h={15} />
              <PushButton $w={85} $h={18}>Erase</PushButton>
              <Gap $h={4} />
              <PushButton $w={85} $h={18}>Print...</PushButton>
              <Gap $h={49} />
              <PushButton $w={85} $h={18}>Close</PushButton>
              <Gap $h={6} />
              <PushButton $w={85} $h={18}>Help</PushButton>
            </CommandColumn>
          </Row>
          <Gap $h={2} />
        </RightSide>
      </Workspace>
      <ConfigureDialog />
    </Page>
  );
}
